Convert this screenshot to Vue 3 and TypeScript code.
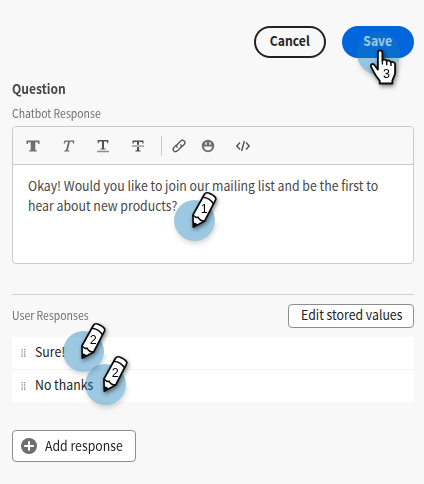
<script setup lang="ts">
interface Marker { id: string; step: string; cls: string }

const responses: string[] = ['Sure!', 'No thanks']
const messageLines: string[] = [
  'Okay! Would you like to join our mailing list and be the first to',
  'hear about new products?',
]
const pencils: Marker[] = [
  { id: 'message', step: '1', cls: 'at-message' },
  { id: 'first', step: '2', cls: 'at-first' },
  { id: 'second', step: '2', cls: 'at-second' },
]
</script>

<template>
  <main class="panel">
    <header class="actions">
      <button class="pill cancel"><span>Cancel</span></button>
      <button class="pill save"><span>Save</span></button>
    </header>

    <h2 class="title"><span>Question</span></h2>
    <div class="label chatbot"><span>Chatbot Response</span></div>

    <section class="editor">
      <div class="toolbar">
        <svg class="tool" viewBox="0 0 14 14"><path d="M.5 1.500h13v3.600h-1.200l-.7-1.800H9.300v7.600l1.600.5v1.100H3.100v-1.100l1.600-.5V3.300H2.400l-.7 1.800H.5z" fill="#6e6e6e" /></svg>
        <svg class="tool" viewBox="0 0 14 14"><path d="M3.500 1.500h10l-.8 3.200h-.8l-.2-2H9l-2.200 8.600 1.800.4-.2.800H3l.2-.8 1.700-.4 2.200-8.600H4.800l-1.300 2h-.9z" fill="#6e6e6e" /></svg>
        <svg class="tool" viewBox="0 0 14 14"><path d="M1.700 1h10.600v3.200h-.9l-.6-1.800H8v7l1.700.3v.8H4.300v-.8L6 9.400v-7H3.200l-.6 1.800h-.9z" fill="#505050" /><path d="M1 12.500h12" stroke="#8e8e8e" stroke-width="1.300" /></svg>
        <svg class="tool" viewBox="0 0 14 14"><path d="M1.500 1.500h11v3h-1l-.6-1.500H8v2.800H6V3H3.100l-.6 1.500h-1zM6 8h2v3.200l1.600.3v1H4.400v-1l1.600-.3z" fill="#505050" /><path d="M1 7h12" stroke="#6e6e6e" stroke-width="1.200" /></svg>
        <i class="split"></i>
        <svg class="tool link" viewBox="0 0 14 14" fill="none" stroke="#505050" stroke-width="1.250" stroke-linecap="round"><path d="M5.200 8.300C4.300 7 4.600 6.100 5.500 5.200L8.500 2.200C9.600 1.100 11.200 1 12.200 2s.9 2.500-.1 3.500L9.700 7.900" /><path d="M8.800 5.700c.9 1.300.6 2.200-.3 3.100l-3 3c-1.100 1.100-2.700 1.200-3.700.2s-.9-2.500.1-3.500l2.400-2.400" /></svg>
        <svg class="tool face" viewBox="0 0 14 14"><circle cx="7" cy="7" r="6.200" fill="#6e6e6e" /><path d="M5 3.200v2.600M9 3.200v2.600" stroke="#f8f8f8" stroke-width="1.400" /><path d="M3 7.400h8c0 2.500-1.700 3.900-4 3.900S3 9.900 3 7.400z" fill="#f8f8f8" /></svg>
        <svg class="tool code" viewBox="0 0 16 14" fill="none" stroke="#505050" stroke-width="1.400"><path d="M5 3.500 1.800 7 5 10.500M11 3.500 14.200 7 11 10.500M9.300 2 6.700 12" /></svg>
      </div>
      <div class="message">
        <div v-for="(line, i) in messageLines" :key="i"><span>{{ line }}</span></div>
      </div>
    </section>

    <hr class="divider" />

    <div class="responses-head">
      <div class="label users"><span>User Responses</span></div>
      <button class="outline edit"><span>Edit stored values</span></button>
    </div>

    <ul class="list">
      <li v-for="item in responses" :key="item">
        <svg class="grip" viewBox="0 0 5 8" fill="#8e8e8e"><path d="M.5 0h1.300v1.300H.5zM3 0h1.300v1.300H3zM.5 2.200h1.300v1.300H.5zM3 2.200h1.300v1.300H3zM.5 4.400h1.300v1.300H.5zM3 4.400h1.300v1.300H3zM.5 6.600h1.300v1.300H.5zM3 6.600h1.300v1.300H3z" /></svg>
        <span>{{ item }}</span>
      </li>
    </ul>

    <button class="outline add">
      <svg viewBox="0 0 16 16"><circle cx="8" cy="8" r="8" fill="#6e6e6e" /><path d="M8 3.200v9.600M3.200 8h9.600" stroke="#fff" stroke-width="2" /></svg>
      <span>Add response</span>
    </button>

    <div v-for="m in pencils" :key="m.id" class="marker" :class="m.cls">
      <svg viewBox="0 0 50 60">
        <path d="M19.300 38.200 18.900 26 30.600 5Q32 2.600 36.800 4.900Q42.600 7.800 41.700 10.600L30.700 32Z" fill="#fff" stroke="#0a0a0a" stroke-width="1.700" stroke-linejoin="round" />
        <path d="M29 8.200Q35.500 8.800 39.600 14.800M19 26Q22 29.200 24 28.200Q26 32.200 30.500 32" fill="none" stroke="#0a0a0a" stroke-width="1.500" />
        <path d="M19.200 33.500Q22 33 23.500 35.700L19.200 38.700Z" fill="#0a0a0a" />
        <text x="30.200" y="23.700" text-anchor="middle">{{ m.step }}</text>
      </svg>
    </div>

    <div class="marker at-save">
      <svg viewBox="0 0 56 64">
        <path d="M20.900 20.800c0-3.200 4.400-3.200 4.500 0v7.600c.7-1.400 3.900-1.200 4.200.8.900-1.300 4-.8 4.300 1.200 1.300-1 4.200-.2 4.200 2.200v8.200c0 3.300-2.500 5.200-2.800 8.200v2.500H22.700v-2.700c-1.800-2.600-3.600-4.400-4.700-6.700l-3.900-7.200c-.8-3 2-3.700 3.500-1.700l3.300 4.400z" fill="#fff" stroke="#0a0a0a" stroke-width="1.800" stroke-linejoin="round" />
        <path d="M25.400 28v4.500M29.700 29.500v3.700M34 30.800v3.200" stroke="#0a0a0a" stroke-width="1.400" />
        <text x="29.400" y="45.900" text-anchor="middle">3</text>
      </svg>
    </div>
  </main>
</template>

<style>
body { margin: 0; background: #f8f8f8; }
</style>

<style scoped>
* { box-sizing: border-box; }
.panel {
  position: relative;
  display: flex;
  flex-direction: column;
  width: 424px;
  height: 484px;
  padding: 26px 10px 0 12px;
  background: #f8f8f8;
  color: #222;
  font: 13.3px/20px "Noto Sans CJK SC", "Noto Sans", sans-serif;
}
span { display: inline-block; white-space: nowrap; transform: translateY(-1px) scaleX(.925); transform-origin: 0 50%; }
button span { transform-origin: 50% 50%; }
button { font: inherit; color: inherit; margin: 0; padding: 0; }
.actions { display: flex; justify-content: flex-end; gap: 16px; }
.pill {
  display: flex; align-items: center; justify-content: center;
  width: 72px; height: 32px; border-radius: 16px;
  border: 2px solid #222; background: #f8f8f8; font-weight: 700;
}
.pill span { transform: translateY(-1px) scaleX(.915); }
.save { border-color: #0265dc; background: #0265dc; color: #fff; }
.title { margin: 21px 0 0; font-size: 13.3px; line-height: 20px; font-weight: 700; color: #464646; }
.title span { transform: scaleX(.91); }
.label { font-size: 11.4px; line-height: 18px; color: #6e6e6e; }
.label span { transform: scaleX(.918); }
.chatbot { margin-top: 5px; }
.editor {
  height: 138px; margin-top: 4px;
  border: 1px solid #cacaca; border-radius: 4px; background: #fff; overflow: hidden;
}
.toolbar {
  display: flex; align-items: center; height: 38px; padding-left: 13px;
  background: #f8f8f8; border-bottom: 1px solid #cacaca;
}
.tool { width: 14px; height: 14px; margin-right: 21px; flex: none; }
.tool:nth-child(4) { margin-right: 16px; }
.split { width: 1px; height: 20px; background: #cacaca; margin-right: 10px; }
.link { margin-right: 15px; }
.face { margin-right: 20px; }
.code { width: 16px; }
.message { padding: 12px 15px; color: #464646; }
.divider { width: 100%; height: 1px; margin: 30px 0 0; border: 0; background: #d0d0d0; }
.responses-head { display: flex; justify-content: space-between; margin-top: 9px; }
.users { margin-top: 2px; }
.outline {
  display: flex; align-items: center; justify-content: center;
  background: #fff; border: 1px solid #8e8e8e; border-radius: 4px; color: #222;
}
.edit { width: 126px; height: 24px; padding-left: 1px; }
.list { margin: 9px 0 0; padding: 0; list-style: none; background: #fff; }
.list li { display: flex; align-items: center; height: 32px; padding-left: 9px; }
.list li + li { height: 33px; border-top: 1px solid #f3f3f3; }
.grip { width: 5px; height: 8px; margin-right: 9px; }
.add { width: 124px; height: 32px; margin-top: 28px; padding-left: 8px; gap: 8px; justify-content: flex-start; }
.add svg { width: 16px; height: 16px; flex: none; }
.add span { transform: scaleX(.925); transform-origin: 0 50%; }
.marker {
  position: absolute; width: 41px; height: 41px; border-radius: 50%;
  background: rgba(20, 125, 185, .42);
}
.marker::before {
  content: ""; position: absolute; inset: 0; border-radius: 50%;
  box-shadow: 1px 3px 5px rgba(0, 0, 0, .15);
  clip-path: polygon(-20% 55%, 120% 55%, 120% 140%, -20% 140%);
}
.marker svg {
  position: absolute; left: 0; top: -11px; width: 50px; height: 60px; overflow: visible;
  filter: drop-shadow(1px 2px 2px rgba(0, 0, 0, .5));
}
.marker text { font: 12.5px "Liberation Sans", sans-serif; fill: #000; }
.at-message { left: 174px; top: 200px; }
.at-first { left: 63px; top: 331px; }
.at-second { left: 85px; top: 364px; }
.at-save { left: 357px; top: 32px; width: 43px; height: 43px; }
.at-message svg, .at-second svg { left: -.5px; }
.at-save svg { left: 0; top: 0; width: 56px; height: 64px; }
</style>
